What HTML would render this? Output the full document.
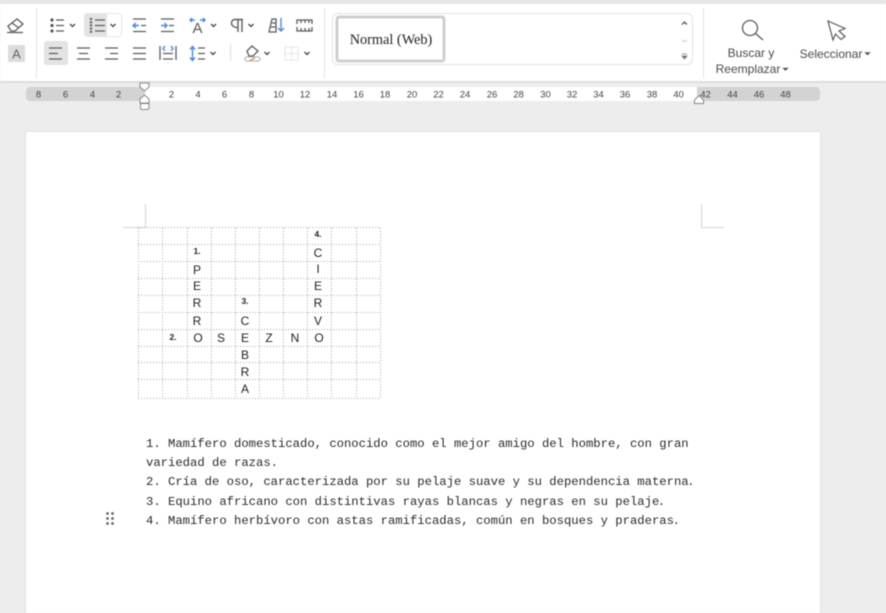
<!DOCTYPE html>
<html lang="es"><head><meta charset="utf-8"><style>
html,body{margin:0;padding:0;width:886px;height:613px;overflow:hidden;background:#ededed}
svg{display:block;filter:blur(.4px)}
text{font-family:"Liberation Sans",sans-serif}
.r{font-size:9.5px;fill:#444;text-anchor:middle}
.g{font-size:12px;fill:#222;text-anchor:middle}
.n{font-size:8.5px;fill:#222;font-weight:bold;text-anchor:middle}
.b{font-family:"Liberation Mono",monospace;font-size:12.22px;fill:#2a2a2a}
.u{font-size:12px;fill:#4a4a4a;text-anchor:middle}
.i{fill:none;stroke:#5c5c5c;stroke-width:1.3}
.bl{fill:none;stroke:#4f86e0;stroke-width:1.4}
.ch{fill:none;stroke:#444;stroke-width:1.3}
</style></head><body>
<svg width="886" height="613" viewBox="0 0 886 613" xmlns="http://www.w3.org/2000/svg">
<rect width="886" height="613" fill="#ededed"/>
<rect width="886" height="4" fill="#e6e6e6"/>
<rect y="4" width="886" height="77" fill="#fff"/>
<rect y="81" width="886" height="2" fill="#dcdcdc"/>
<g stroke="#e4e4e4"><path d="M36.500 8V78M324.500 8V78M703.500 8V78"/></g>

<!-- eraser + A -->
<g class="i"><path d="M8 26L17 19L23 24L15 31H11Z"/><path d="M12 23L19 28"/><path d="M7 32.500H23"/></g>
<rect x="8" y="45" width="17" height="17" fill="#dcdcdc"/><text x="16.500" y="58.500" font-size="13" fill="#666" text-anchor="middle">A</text>

<!-- bullets -->
<g fill="#555"><circle cx="52" cy="20" r="1.600"/><circle cx="52" cy="25.500" r="1.600"/><circle cx="52" cy="31" r="1.600"/></g>
<g class="i"><path d="M56 20H64M56 25.500H64M56 31H64"/></g><path class="ch" d="M70 24L72.500 26.500L75 24"/>
<!-- numbered -->
<rect x="84.500" y="13.500" width="37" height="23" rx="3" fill="#fff" stroke="#e6e6e6"/>
<path d="M85 14H107V36H85Q84.500 36 84.500 35V15Z" fill="#e3e3e3"/>
<g class="i"><path d="M95 20H105M95 25.500H105M95 31H105"/><path d="M91 18V33" stroke-dasharray="2 1.200" stroke-width="2.200"/></g><path class="ch" d="M110.500 24L113 26.500L115.500 24"/>
<!-- indent -->
<g class="i"><path d="M133 19H146M133 31.500H146M141 25.500H146"/></g><path class="bl" d="M133 25.500H139M136 23L133 25.500L136 28"/>
<g class="i"><path d="M161 19H174M161 31.500H174M169 25.500H174"/></g><path class="bl" d="M161 25.500H167M164.500 23L167 25.500L164.500 28"/>
<!-- A arrows -->
<text x="197.500" y="33" font-size="15" fill="#555" text-anchor="middle">A</text><path class="bl" d="M190 20H195M192 18L190 20L192 22M200 20H205M203 18L205 20L203 22"/><path class="ch" d="M211 24L213.500 26.500L216 24"/>
<!-- pilcrow -->
<path d="M238 27.500C233 27.500 231.500 25 231.500 23C231.500 21 233 19.500 235 19.500H243M238 19.500V32M242 19.500V32" fill="none" stroke="#5c5c5c" stroke-width="1.400"/><path class="ch" d="M248.500 24L251 26.500L253.500 24"/>
<!-- sort -->
<g class="i"><path d="M269 32L272 19H276V32ZM271 27H276M272 23H276"/></g><path class="bl" d="M281 18V31M278 28L281 31L284 28"/>
<!-- ruler icon -->
<g class="i"><path d="M297 24V20H312V24M297 27V31H312V27"/><path d="M301 28V31M305 28V31M309 28V31M301 20V23M305 20V23M309 20V23"/></g>

<!-- align row -->
<rect x="44" y="41" width="24" height="24" rx="3" fill="#e3e3e3"/>
<g class="i"><path d="M49 48H62M49 53.500H58M49 59H62"/>
<path d="M77 48H90M79 53.500H88M77 59H90"/><path d="M105 48H118M110 53.500H118M105 59H118"/><path d="M133 48H146M133 53.500H146M133 59H146"/>
<path d="M160 46V60M176 46V60M163 53.500H173M163 59H173"/></g>
<path class="bl" d="M165 46L163 48.500L165 51M171 46L173 48.500L171 51"/>
<path class="bl" d="M192.500 47V60M190 49.500L192.500 46.500L195 49.500M190 57.500L192.500 60.500L195 57.500" stroke-width="1.500"/>
<g class="i"><path d="M198 48H205M198 53.500H205M198 59H205"/></g><path class="ch" d="M210.500 52L213 54.500L215.500 52"/>
<path d="M230.500 44V61" stroke="#e0e0e0"/>
<!-- shading -->
<g class="i"><path d="M247 51L252 46L258 51L253 56H249Z"/></g><rect x="245" y="57" width="15" height="4" rx="2" fill="none" stroke="#aaa"/><path d="M250 60.500L255 58" stroke="#d9794f"/><path class="ch" d="M264.500 52L267 54.500L269.500 52"/>
<!-- borders -->
<g fill="none" stroke="#d6d6d6" stroke-dasharray="1.500 1"><rect x="285" y="47" width="13" height="13"/><path d="M291.500 47V60M285 53.500H298"/></g><path class="ch" d="M304.500 52L307 54.500L309.500 52"/>

<!-- style gallery -->
<rect x="332.500" y="13.500" width="360" height="51" rx="5" fill="#fff" stroke="#e2e2e2"/>
<rect x="337" y="17" width="107" height="44" rx="2" fill="#fff" stroke="#cfcfcf" stroke-width="3"/>
<text x="391" y="44" font-size="14.300" fill="#222" text-anchor="middle" style="font-family:'Liberation Serif',serif">Normal (Web)</text>
<path d="M682 24.500L684.500 22L687 24.500" fill="none" stroke="#555" stroke-width="1.300"/>
<path d="M682 40L684.500 42L687 40" fill="none" stroke="#ccc"/>
<path d="M682 54H687M682 56L684.500 59L687 56Z" fill="#777" stroke="#777" stroke-width=".8"/>

<!-- find / select -->
<g class="i"><circle cx="750" cy="28" r="7.500"/><path d="M755.500 33.500L763 40"/></g>
<path d="M828 21L845 28.500L839 31L845 36.500L841 39.500L835.500 34L833 40Z" fill="none" stroke="#5c5c5c" stroke-width="1.200"/>
<text class="u" x="751" y="57">Buscar y</text>
<text class="u" x="748" y="73">Reemplazar</text><path d="M783 68H788L785.500 70.500Z" fill="#555" stroke="#555" stroke-width=".6"/>
<text class="u" x="831" y="58">Seleccionar</text><path d="M865 52.500H870L867.500 55Z" fill="#555" stroke="#555" stroke-width=".6"/>

<!-- ruler -->
<rect x="26" y="87" width="794" height="14" rx="4" fill="#d3d3d3"/>
<rect x="145" y="87" width="552" height="14" fill="#fff"/>
<g class="r">
<text x="38.500" y="97.500">8</text><text x="65.500" y="97.500">6</text><text x="92.500" y="97.500">4</text><text x="118.500" y="97.500">2</text>
<text x="171.500" y="97.500">2</text><text x="198" y="97.500">4</text><text x="224.500" y="97.500">6</text><text x="251.500" y="97.500">8</text><text x="278.500" y="97.500">10</text><text x="305" y="97.500">12</text><text x="332" y="97.500">14</text><text x="358.500" y="97.500">16</text><text x="385" y="97.500">18</text><text x="412" y="97.500">20</text><text x="438.500" y="97.500">22</text><text x="465" y="97.500">24</text><text x="492" y="97.500">26</text><text x="518.500" y="97.500">28</text><text x="545.500" y="97.500">30</text><text x="572" y="97.500">32</text><text x="598.500" y="97.500">34</text><text x="625" y="97.500">36</text><text x="652" y="97.500">38</text><text x="678.500" y="97.500">40</text><text x="705.500" y="97.500">42</text><text x="732.500" y="97.500">44</text><text x="759" y="97.500">46</text><text x="785.500" y="97.500">48</text>
</g>
<g fill="#fff" stroke="#888" stroke-width="1"><path d="M140 83H149V87L144.500 91L140 87Z"/><path d="M140 103V99L144.500 95L149 99V103Z"/><rect x="140.500" y="103.500" width="8.500" height="6" rx="1.500"/><path d="M694.500 103.500V100L699 95.500L703.500 100V103.500Z"/></g>

<!-- page -->
<rect x="25.500" y="131.500" width="795" height="490" fill="#fff" stroke="#e2e2e2"/>
<g stroke="#d4d4d4" fill="none"><path d="M145.500 204V227.500H123"/><path d="M701.500 204V227.500H724"/></g>

<!-- grid -->
<g stroke="#a8a8a8" stroke-dasharray="1 2" fill="none">
<path d="M138.500 228V398M162.500 228V398M187.500 228V398M211.500 228V398M235.500 228V398M259.500 228V398M283.500 228V398M307.500 228V398M331.500 228V398M356.500 228V398M380.500 228V398"/>
<path d="M138 227.500H380M138 244.500H380M138 261.500H380M138 278.500H380M138 295.500H380M138 312.500H380M138 329.500H380M138 346.500H380M138 362.500H380M138 379.500H380M138 398.500H380"/>
</g>
<text class="n" x="318" y="237">4.</text>
<text class="n" x="197" y="254">1.</text><text class="g" x="318" y="257">C</text>
<text class="g" x="197" y="274">P</text><text class="g" x="318" y="273">I</text>
<text class="g" x="197" y="290">E</text><text class="g" x="318" y="290">E</text>
<text class="g" x="197" y="307">R</text><text class="n" x="245" y="304">3.</text><text class="g" x="318" y="307">R</text>
<text class="g" x="197" y="325">R</text><text class="g" x="245" y="325">C</text><text class="g" x="318" y="325">V</text>
<text class="n" x="173" y="340">2.</text><text class="g" x="198" y="342">O</text><text class="g" x="221" y="342">S</text><text class="g" x="245" y="342">E</text><text class="g" x="269" y="342">Z</text><text class="g" x="295" y="342">N</text><text class="g" x="319" y="342">O</text>
<text class="g" x="245" y="359">B</text><text class="g" x="245" y="376">R</text><text class="g" x="245" y="393">A</text>

<!-- list -->
<text class="b" x="146" y="447">1.</text><text class="b" x="168" y="447">Mamífero domesticado, conocido como el mejor amigo del hombre, con gran</text>
<text class="b" x="146" y="466">variedad de razas.</text>
<text class="b" x="146" y="485">2.</text><text class="b" x="168" y="485">Cría de oso, caracterizada por su pelaje suave y su dependencia materna<tspan dx="-1.500">.</tspan></text>
<text class="b" x="146" y="505">3.</text><text class="b" x="168" y="505">Equino africano con distintivas rayas blancas y negras en su pelaje<tspan dx="-1.500">.</tspan></text>
<text class="b" x="146" y="524">4.</text><text class="b" x="168" y="524">Mamífero herbívoro con astas ramificadas, común en bosques y praderas<tspan dx="-1.500">.</tspan></text>
<g fill="#666"><circle cx="107.500" cy="513.500" r="1.400"/><circle cx="112.500" cy="513.500" r="1.400"/><circle cx="107.500" cy="518.500" r="1.400"/><circle cx="112.500" cy="518.500" r="1.400"/><circle cx="107.500" cy="523.500" r="1.400"/><circle cx="112.500" cy="523.500" r="1.400"/></g>
</svg>
</body></html>
